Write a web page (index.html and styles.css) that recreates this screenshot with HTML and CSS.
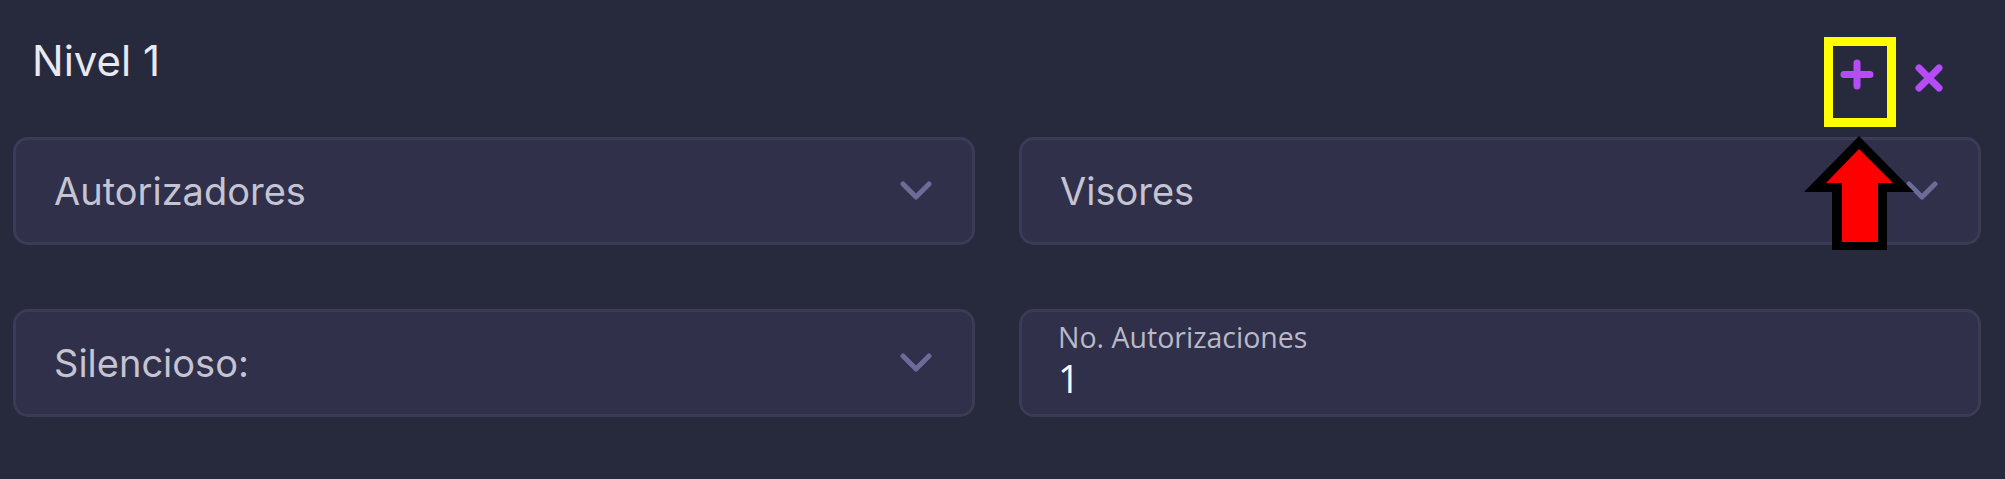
FILE: index.html
```html
<!DOCTYPE html>
<html lang="es">
<head>
  <meta charset="UTF-8">
  <meta name="viewport" content="width=device-width, initial-scale=1.0">
  <title>Nivel 1</title>
  <link rel="stylesheet" href="styles.css">
</head>
<body>

  <div class="panel">
    <div class="panel-header">
      <h2 class="panel-title">Nivel 1</h2>
      <div class="acciones">
        <button class="icon-btn agregar" title="Agregar nivel">
          <svg width="34" height="31" viewBox="0 0 34 31">
            <path d="M17 4 V27 M4 15.5 H30" />
          </svg>
        </button>
        <button class="icon-btn quitar" title="Eliminar nivel">
          <svg width="30" height="30" viewBox="0 0 30 30">
            <path d="M5 5 L25 25 M25 5 L5 25" />
          </svg>
        </button>
      </div>
    </div>

    <div class="campos">
      <div class="campo select">
        <span class="placeholder">Autorizadores</span>
        <svg class="chevron" width="32" height="20" viewBox="0 0 32 20"><polyline points="3,3 16,16 29,3" /></svg>
      </div>
      <div class="campo select">
        <span class="placeholder">Visores</span>
        <svg class="chevron" width="32" height="20" viewBox="0 0 32 20"><polyline points="3,3 16,16 29,3" /></svg>
      </div>
      <div class="campo select">
        <span class="placeholder">Silencioso:</span>
        <svg class="chevron" width="32" height="20" viewBox="0 0 32 20"><polyline points="3,3 16,16 29,3" /></svg>
      </div>
      <div class="campo input">
        <label for="noAut">No. Autorizaciones</label>
        <input id="noAut" type="text" value="1">
      </div>
    </div>
  </div>

  <!-- marcas de la captura -->
  <div class="marco"></div>
  <svg class="flecha" width="120" height="125" viewBox="0 0 120 125">
    <polygon points="59,6 4,62 32,62 32,120 87,120 87,62 114,62" fill="#000" />
    <polygon points="59,19 26,53 42,53 42,112 78,112 78,53 93,53" fill="#ff0000" />
  </svg>

</body>
</html>
```

FILE: styles.css
```css
* {
  margin: 0;
  padding: 0;
  box-sizing: border-box;
}

body {
  background: #272a3d;
  font-family: 'Inter', sans-serif;
  overflow: hidden;
  position: relative;
  height: 100vh;
}

.panel {
  padding: 0 24px 0 13px;
}

.panel-header {
  display: flex;
  justify-content: space-between;
  align-items: flex-start;
  height: 137px;
  padding-top: 36px;
}

.panel-title {
  margin-left: 19px;
  font-size: 42px;
  line-height: 50px;
  font-weight: 400;
  color: #e9e9f1;
}

.acciones {
  display: flex;
  gap: 24px;
  margin-top: 14px;
  margin-right: 28px;
}

.icon-btn {
  width: 48px;
  height: 48px;
  background: none;
  border: none;
  cursor: pointer;
  display: flex;
  align-items: center;
  justify-content: center;
}

.icon-btn path {
  stroke: #b54cf8;
  stroke-width: 7;
  stroke-linecap: round;
  fill: none;
}

.icon-btn.quitar svg {
  margin-top: 8px;
}

.campos {
  display: grid;
  grid-template-columns: 1fr 1fr;
  grid-auto-rows: 108px;
  column-gap: 44px;
  row-gap: 64px;
}

.campo {
  background: #30304a;
  border: 3px solid #3b3b56;
  border-radius: 15px;
}

.campo.select {
  display: flex;
  align-items: center;
  justify-content: space-between;
  padding: 0 40px 0 38px;
  cursor: pointer;
}

.placeholder {
  font-size: 38px;
  color: #c4c4d2;
}

.chevron polyline {
  fill: none;
  stroke: #6c6b99;
  stroke-width: 5;
  stroke-linecap: round;
  stroke-linejoin: round;
}

.campo.input {
  display: flex;
  flex-direction: column;
  padding: 9px 36px 0;
  font-family: 'Open Sans', sans-serif;
}

.campo.input label {
  font-size: 28.5px;
  line-height: 33px;
  color: #b9b9c8;
}

.campo.input input {
  background: none;
  border: none;
  outline: none;
  font-family: inherit;
  font-size: 38px;
  line-height: 46px;
  margin-top: 1px;
  color: #ffffff;
}

/* Recuadro amarillo y flecha de la captura */
.marco {
  position: absolute;
  left: 1824px;
  top: 37px;
  width: 72px;
  height: 90px;
  border: 9px solid #ffff00;
}

.flecha {
  position: absolute;
  left: 1800px;
  top: 130px;
}
```
